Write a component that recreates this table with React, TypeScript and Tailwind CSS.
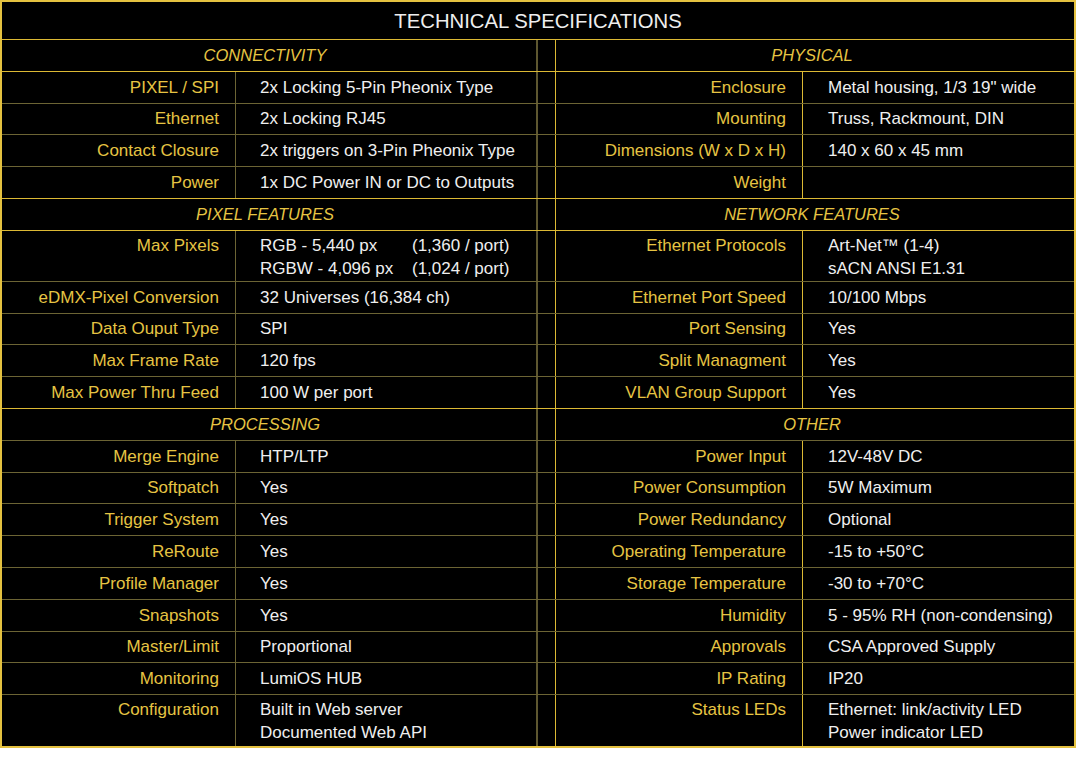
import React from "react";

type Cell = { label: string; value: React.ReactNode };
type Line =
  | { kind: "header"; left: string; right: string; dimBottom?: boolean }
  | { kind: "data"; l: Cell; r: Cell; tall?: boolean };

const lines: Line[] = [
  { kind: "header", left: "CONNECTIVITY", right: "PHYSICAL" },
  {
    kind: "data",
    l: { label: "PIXEL / SPI", value: "2x Locking 5-Pin Pheonix Type" },
    r: { label: "Enclosure", value: "Metal housing, 1/3 19\" wide" },
  },
  {
    kind: "data",
    l: { label: "Ethernet", value: "2x Locking RJ45" },
    r: { label: "Mounting", value: "Truss, Rackmount, DIN" },
  },
  {
    kind: "data",
    l: { label: "Contact Closure", value: "2x triggers on 3-Pin Pheonix Type" },
    r: { label: "Dimensions (W x D x H)", value: "140 x 60 x 45 mm" },
  },
  {
    kind: "data",
    l: { label: "Power", value: "1x DC Power IN or DC to Outputs" },
    r: { label: "Weight", value: "" },
  },
  { kind: "header", left: "PIXEL FEATURES", right: "NETWORK FEATURES" },
  {
    kind: "data",
    tall: true,
    l: {
      label: "Max Pixels",
      value: (
        <div className="grid grid-cols-[152px_auto]">
          <span>RGB - 5,440 px</span>
          <span>(1,360 / port)</span>
          <span>RGBW - 4,096 px</span>
          <span>(1,024 / port)</span>
        </div>
      ),
    },
    r: {
      label: "Ethernet Protocols",
      value: (
        <>
          <div>Art-Net™ (1-4)</div>
          <div>sACN ANSI E1.31</div>
        </>
      ),
    },
  },
  {
    kind: "data",
    l: { label: "eDMX-Pixel Conversion", value: "32 Universes (16,384 ch)" },
    r: { label: "Ethernet Port Speed", value: "10/100 Mbps" },
  },
  {
    kind: "data",
    l: { label: "Data Ouput Type", value: "SPI" },
    r: { label: "Port Sensing", value: "Yes" },
  },
  {
    kind: "data",
    l: { label: "Max Frame Rate", value: "120 fps" },
    r: { label: "Split Managment", value: "Yes" },
  },
  {
    kind: "data",
    l: { label: "Max Power Thru Feed", value: "100 W per port" },
    r: { label: "VLAN Group Support", value: "Yes" },
  },
  { kind: "header", left: "PROCESSING", right: "OTHER", dimBottom: true },
  {
    kind: "data",
    l: { label: "Merge Engine", value: "HTP/LTP" },
    r: { label: "Power Input", value: "12V-48V DC" },
  },
  {
    kind: "data",
    l: { label: "Softpatch", value: "Yes" },
    r: { label: "Power Consumption", value: "5W Maximum" },
  },
  {
    kind: "data",
    l: { label: "Trigger System", value: "Yes" },
    r: { label: "Power Redundancy", value: "Optional" },
  },
  {
    kind: "data",
    l: { label: "ReRoute", value: "Yes" },
    r: { label: "Operating Temperature", value: "-15 to +50°C" },
  },
  {
    kind: "data",
    l: { label: "Profile Manager", value: "Yes" },
    r: { label: "Storage Temperature", value: "-30 to +70°C" },
  },
  {
    kind: "data",
    l: { label: "Snapshots", value: "Yes" },
    r: { label: "Humidity", value: "5 - 95% RH (non-condensing)" },
  },
  {
    kind: "data",
    l: { label: "Master/Limit", value: "Proportional" },
    r: { label: "Approvals", value: "CSA Approved Supply" },
  },
  {
    kind: "data",
    l: { label: "Monitoring", value: "LumiOS HUB" },
    r: { label: "IP Rating", value: "IP20" },
  },
  {
    kind: "data",
    tall: true,
    l: {
      label: "Configuration",
      value: (
        <>
          <div>Built in Web server</div>
          <div>Documented Web API</div>
        </>
      ),
    },
    r: {
      label: "Status LEDs",
      value: (
        <>
          <div>Ethernet: link/activity LED</div>
          <div>Power indicator LED</div>
        </>
      ),
    },
  },
];

export default function App() {
  return (
    <div className="bg-white w-[1076px] h-[760px] font-['Liberation_Sans',Arial,sans-serif]">
      <div className="w-[1076px] border-2 border-[#e4c140] bg-black">
        {/* Title */}
        <div className="h-[38px] border-b border-[#dcb934] flex items-center justify-center pt-[2px] text-[20.3px] text-[#eeeeee]">
          TECHNICAL SPECIFICATIONS
        </div>

        {lines.map((line, i) => {
          const next = lines[i + 1];
          const last = i === lines.length - 1;
          let bottom = "border-b border-b-[#6c6434]";
          if (last) bottom = "";
          else if (line.kind === "header")
            bottom = line.dimBottom
              ? "border-b border-b-[#6c6434]"
              : "border-b border-b-[#dcb934]";
          else if (next && next.kind === "header")
            bottom = "border-b border-b-[#dcb934]";

          if (line.kind === "header") {
            return (
              <div
                key={i}
                className={`grid grid-cols-[234px_302px_18px_247px_1fr] h-[31.8px] text-[16.5px] italic text-[#e6c443] ${bottom}`}
              >
                <div className="col-span-2 border-r-2 border-r-[#5e5730] flex items-center justify-center pr-[8px]">
                  {line.left}
                </div>
                <div className="border-r border-r-[#dcb934]" />
                <div className="col-span-2 flex items-center justify-center pr-[6px]">
                  {line.right}
                </div>
              </div>
            );
          }

          const h = line.tall ? "h-[51px]" : "h-[31.8px]";
          const align = line.tall ? "items-start pt-[3px]" : "items-center";
          return (
            <div
              key={i}
              className={`grid grid-cols-[234px_302px_18px_247px_1fr] ${h} text-[17px] leading-[23px] ${bottom}`}
            >
              <div
                className={`border-r border-r-[#6c6434] flex justify-end pr-[16px] text-[#e6c443] ${align}`}
              >
                {line.l.label}
              </div>
              <div
                className={`border-r-2 border-r-[#5e5730] pl-[24px] text-[#efefef] ${
                  line.tall ? "pt-[3px]" : "flex items-center"
                }`}
              >
                {line.l.value}
              </div>
              <div className="border-r border-r-[#dcb934]" />
              <div
                className={`border-r border-r-[#dcb934] flex justify-end pr-[16px] text-[#e6c443] ${align}`}
              >
                {line.r.label}
              </div>
              <div
                className={`pl-[25px] text-[#efefef] ${
                  line.tall ? "pt-[3px]" : "flex items-center"
                }`}
              >
                {line.r.value}
              </div>
            </div>
          );
        })}
      </div>
    </div>
  );
}
